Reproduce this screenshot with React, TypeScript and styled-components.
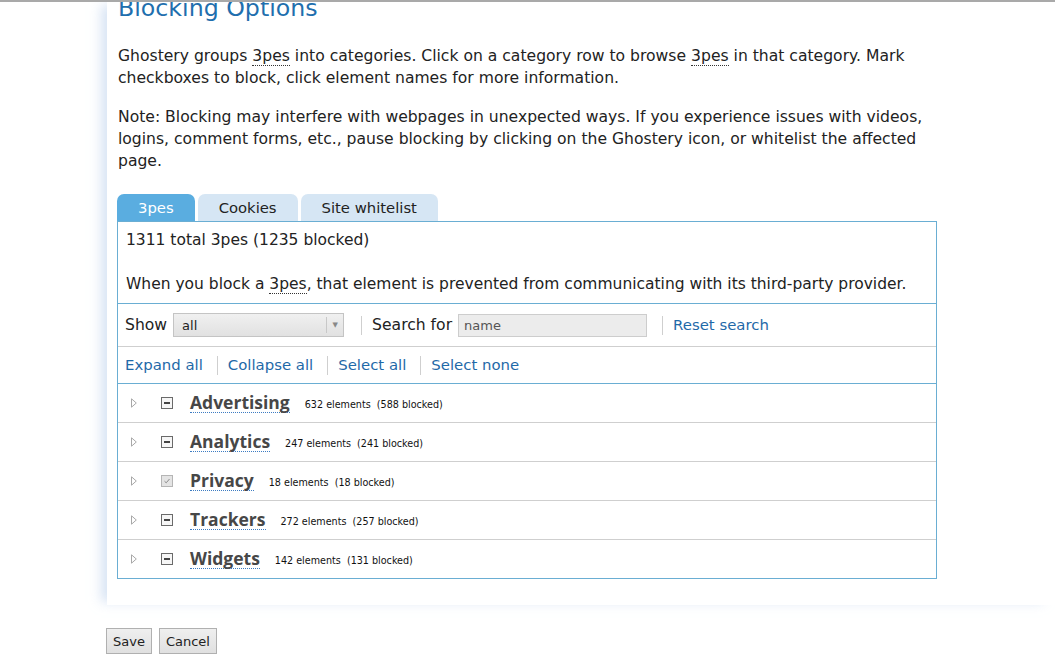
import React from "react";
import styled, { createGlobalStyle } from "styled-components";

const Global = createGlobalStyle`
  html, body { margin: 0; padding: 0; background: #fff; overflow: hidden; }
  body { font-family: "DejaVu Sans", Verdana, sans-serif; color: #222; }
`;

const TopLine = styled.div`
  height: 2px;
  background: #a9a9a9;
`;

const Viewport = styled.div`
  overflow: hidden;
  height: 656px;
`;

const Page = styled.div`
  padding-left: 106px;
  width: 1055px;
  box-sizing: border-box;
`;

const Sheet = styled.div`
  display: flow-root;
  margin-left: 1px;
  background: #fff;
  box-shadow: -9px 0 11px -3px rgba(195, 214, 238, 0.65);
  padding: 0 0 26px 10px;
`;

const Heading = styled.h2`
  margin: -7px 0 0 1px;
  font-size: 23.7px;
  line-height: 26px;
  font-weight: normal;
  color: #1f6fae;
`;

const Para = styled.p<{ $top: number }>`
  margin: ${(p) => p.$top}px 0 0 1px;
  font-size: 15.6px;
  line-height: 22px;
  width: 810px;
`;

const Abbr = styled.span`
  border-bottom: 1px dotted #333;
`;

const Tabs = styled.div`
  display: flex;
  gap: 3px;
  margin-top: 22px;
`;

const Tab = styled.div<{ $active?: boolean }>`
  height: 27px;
  line-height: 27px;
  padding: 0 21px;
  font-size: 14.8px;
  border-radius: 7px 7px 0 0;
  background: ${(p) => (p.$active ? "#5aade0" : "#d6e6f4")};
  color: ${(p) => (p.$active ? "#fff" : "#222")};
`;

const Panel = styled.div`
  width: 818px;
  border: 1px solid #6aaed3;
`;

const Info = styled.div`
  padding: 7px 8px 8px;
  font-size: 15.5px;
  line-height: 22px;
  border-bottom: 1px solid #6aaed3;
  p { margin: 0; }
  p + p { margin-top: 22px; }
`;

const Bar = styled.div<{ $h: number; $line: string }>`
  display: flex;
  align-items: center;
  height: ${(p) => p.$h}px;
  padding: 0 7px;
  border-bottom: 1px solid ${(p) => p.$line};
  font-size: 15.6px;
`;

const Sep = styled.span<{ $l: number }>`
  width: 1px;
  height: 19px;
  background: #cfcfcf;
  margin: 0 10px 0 ${(p) => p.$l}px;
`;

const Label = styled.span<{ $gap: number }>`
  margin-right: ${(p) => p.$gap}px;
`;

const Select = styled.div`
  display: flex;
  align-items: center;
  width: 169px;
  height: 22px;
  border: 1px solid #c4c4c4;
  background: linear-gradient(#f0f0f0, #e1e1e1);
  font-size: 13px;
`;

const SelectText = styled.span`
  flex: 1;
  padding-left: 8px;
`;

const SelectArrow = styled.span`
  width: 16px;
  height: 16px;
  border-left: 1px solid #c8c8c8;
  display: flex;
  align-items: center;
  justify-content: center;
  font-size: 7px;
  color: #888;
`;

const Input = styled.div`
  width: 182px;
  height: 21px;
  border: 1px solid #cdcdcd;
  background: #ececec;
  font-size: 13px;
  line-height: 21px;
  padding-left: 5px;
  color: #555;
`;

const Link = styled.a`
  color: #1f69a8;
  text-decoration: none;
  font-size: 14.9px;
`;

const Row = styled.div`
  display: flex;
  align-items: center;
  height: 38px;
  border-bottom: 1px solid #cfcfcf;
  &:last-child { border-bottom: none; }
`;

const Toggle = styled.svg`
  margin-left: 13px;
  margin-right: 24px;
`;

const Check = styled.span<{ $checked?: boolean }>`
  width: 10px;
  height: 10px;
  border: 1px solid ${(p) => (p.$checked ? "#b5b5b5" : "#6a6a6a")};
  background: ${(p) => (p.$checked ? "#e4e4e4" : "#f6f6f6")};
  display: flex;
  align-items: center;
  justify-content: center;
  margin-right: 17px;
`;

const Dash = styled.span`
  width: 6px;
  height: 2px;
  background: #444;
`;

const CatName = styled.span`
  font-family: "Open Sans", "DejaVu Sans", sans-serif;
  font-weight: 700;
  font-size: 17.5px;
  color: #474747;
  line-height: 20px;
  border-bottom: 1px dotted #3d7cc2;
  margin-right: 15px;
  margin-top: -2px;
`;

const Count = styled.span`
  font-size: 9.6px;
  color: #111;
  margin-top: 3px;
`;

const Buttons = styled.div`
  display: flex;
  gap: 7px;
  margin-top: 23px;
`;

const Button = styled.button`
  height: 26px;
  padding: 0 6px;
  font-family: "DejaVu Sans", sans-serif;
  font-size: 13px;
  color: #222;
  border: 1px solid #b0b0b0;
  background: linear-gradient(#efefef, #e0e0e0);
  border-radius: 0;
`;

const cats = [
  { name: "Advertising", count: "632 elements", blocked: "(588 blocked)" },
  { name: "Analytics", count: "247 elements", blocked: "(241 blocked)" },
  { name: "Privacy", count: "18 elements", blocked: "(18 blocked)", checked: true },
  { name: "Trackers", count: "272 elements", blocked: "(257 blocked)" },
  { name: "Widgets", count: "142 elements", blocked: "(131 blocked)" },
];

export default function App() {
  return (
    <>
      <Global />
      <TopLine />
      <Viewport>
        <Page>
          <Sheet>
            <Heading>Blocking Options</Heading>
            <Para $top={24}>
              Ghostery groups <Abbr>3pes</Abbr> into categories. Click on a category row to browse{" "}
              <Abbr>3pes</Abbr> in that category. Mark checkboxes to block, click element names for more
              information.
            </Para>
            <Para $top={17}>
              Note: Blocking may interfere with webpages in unexpected ways. If you experience issues with
              videos, logins, comment forms, etc., pause blocking by clicking on the Ghostery icon, or
              whitelist the affected page.
            </Para>
            <Tabs>
              <Tab $active>3pes</Tab>
              <Tab>Cookies</Tab>
              <Tab>Site whitelist</Tab>
            </Tabs>
            <Panel>
              <Info>
                <p>1311 total 3pes (1235 blocked)</p>
                <p>
                  When you block a <Abbr>3pes</Abbr>, that element is prevented from communicating with its
                  third-party provider.
                </p>
              </Info>
              <Bar $h={42} $line="#cfcfcf">
                <Label $gap={6}>Show</Label>
                <Select>
                  <SelectText>all</SelectText>
                  <SelectArrow>▼</SelectArrow>
                </Select>
                <Sep $l={17} />
                <Label $gap={6}>Search for</Label>
                <Input>name</Input>
                <Sep $l={15} />
                <Link>Reset search</Link>
              </Bar>
              <Bar $h={36} $line="#6aaed3">
                <Link>Expand all</Link>
                <Sep $l={14} />
                <Link>Collapse all</Link>
                <Sep $l={14} />
                <Link>Select all</Link>
                <Sep $l={14} />
                <Link>Select none</Link>
              </Bar>
              {cats.map((c) => (
                <Row key={c.name}>
                  <Toggle width="6" height="10" viewBox="0 0 6 10">
                    <path d="M0.5 0.8 L5.3 5 L0.5 9.2 Z" fill="#fff" stroke="#a8a8a8" strokeWidth="1" />
                  </Toggle>
                  <Check $checked={c.checked}>
                    {c.checked ? (
                      <svg width="8" height="8" viewBox="0 0 8 8">
                        <path d="M1.5 4.2 L3.2 5.8 L6.5 2" fill="none" stroke="#8a8a8a" strokeWidth="1" />
                      </svg>
                    ) : (
                      <Dash />
                    )}
                  </Check>
                  <CatName>{c.name}</CatName>
                  <Count>
                    {c.count}&nbsp;&nbsp;{c.blocked}
                  </Count>
                </Row>
              ))}
            </Panel>
          </Sheet>
          <Buttons>
            <Button>Save</Button>
            <Button>Cancel</Button>
          </Buttons>
        </Page>
      </Viewport>
    </>
  );
}
